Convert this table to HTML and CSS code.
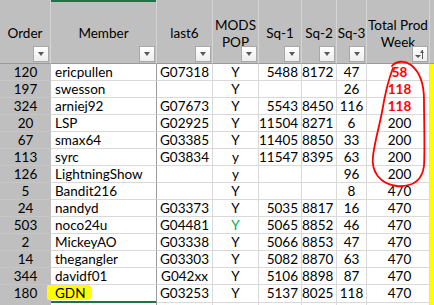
FILE: index.html
```html
<!DOCTYPE html>
<html>
<head>
<meta charset="utf-8">
<link rel="stylesheet" href="styles.css">
</head>
<body>
<div class="sheet">
  <div class="hrow">
    <div class="h">Order<span class="dd"></span></div>
    <div class="h h-member">Member<span class="dd"></span></div>
    <div class="h">last6<span class="dd"></span></div>
    <div class="h">MODS<br>POP<span class="dd"></span></div>
    <div class="h">Sq-1<span class="dd"></span></div>
    <div class="h">Sq-2<span class="dd"></span></div>
    <div class="h">Sq-3<span class="dd"></span></div>
    <div class="h">Total Prod<br>Week<span class="dd dd-sort"><span class="up"></span></span></div>
    <div class="h h-edge"></div>
  </div>

  <div class="row"><div class="c o">120</div><div class="c m">ericpullen</div><div class="c l">G07318</div><div class="c p">Y</div><div class="c s1">5488</div><div class="c s2">8172</div><div class="c s3">47</div><div class="c t red">58</div><div class="c e"></div></div>
  <div class="row"><div class="c o">197</div><div class="c m">swesson</div><div class="c l"></div><div class="c p">Y</div><div class="c s1"></div><div class="c s2"></div><div class="c s3">26</div><div class="c t red">118</div><div class="c e"></div></div>
  <div class="row"><div class="c o">324</div><div class="c m">arniej92</div><div class="c l">G07673</div><div class="c p">Y</div><div class="c s1">5543</div><div class="c s2">8450</div><div class="c s3">116</div><div class="c t red">118</div><div class="c e"></div></div>
  <div class="row"><div class="c o">20</div><div class="c m">LSP</div><div class="c l">G02925</div><div class="c p">Y</div><div class="c s1">11504</div><div class="c s2">8271</div><div class="c s3">6</div><div class="c t">200</div><div class="c e"></div></div>
  <div class="row"><div class="c o">67</div><div class="c m">smax64</div><div class="c l">G03385</div><div class="c p">Y</div><div class="c s1">11405</div><div class="c s2">8850</div><div class="c s3">33</div><div class="c t">200</div><div class="c e"></div></div>
  <div class="row"><div class="c o">113</div><div class="c m">syrc</div><div class="c l">G03834</div><div class="c p">y</div><div class="c s1">11547</div><div class="c s2">8395</div><div class="c s3">63</div><div class="c t">200</div><div class="c e"></div></div>
  <div class="row"><div class="c o">126</div><div class="c m">LightningShow</div><div class="c l"></div><div class="c p">y</div><div class="c s1"></div><div class="c s2"></div><div class="c s3">96</div><div class="c t">200</div><div class="c e"></div></div>
  <div class="row"><div class="c o">5</div><div class="c m">Bandit216</div><div class="c l"></div><div class="c p">Y</div><div class="c s1"></div><div class="c s2"></div><div class="c s3">8</div><div class="c t">470</div><div class="c e"></div></div>
  <div class="row"><div class="c o">24</div><div class="c m">nandyd</div><div class="c l">G03373</div><div class="c p">Y</div><div class="c s1">5035</div><div class="c s2">8817</div><div class="c s3">16</div><div class="c t">470</div><div class="c e"></div></div>
  <div class="row"><div class="c o">503</div><div class="c m">noco24u</div><div class="c l">G04481</div><div class="c p green">Y</div><div class="c s1">5065</div><div class="c s2">8852</div><div class="c s3">46</div><div class="c t">470</div><div class="c e"></div></div>
  <div class="row"><div class="c o">2</div><div class="c m">MickeyAO</div><div class="c l">G03338</div><div class="c p">Y</div><div class="c s1">5066</div><div class="c s2">8853</div><div class="c s3">47</div><div class="c t">470</div><div class="c e"></div></div>
  <div class="row"><div class="c o">14</div><div class="c m">thegangler</div><div class="c l">G03303</div><div class="c p">Y</div><div class="c s1">5082</div><div class="c s2">8870</div><div class="c s3">63</div><div class="c t">470</div><div class="c e"></div></div>
  <div class="row"><div class="c o">344</div><div class="c m">davidf01</div><div class="c l">G042xx</div><div class="c p">Y</div><div class="c s1">5106</div><div class="c s2">8898</div><div class="c s3">87</div><div class="c t">470</div><div class="c e"></div></div>
  <div class="row"><div class="c o">180</div><div class="c m m-active"><span class="hl">GDN</span></div><div class="c l">G03253</div><div class="c p">Y</div><div class="c s1">5137</div><div class="c s2">8025</div><div class="c s3">118</div><div class="c t">470</div><div class="c e"></div></div>
  <div class="row"><div class="c o"></div><div class="c m"></div><div class="c l"></div><div class="c p"></div><div class="c s1"></div><div class="c s2"></div><div class="c s3"></div><div class="c t"></div><div class="c e"></div></div>

  <svg class="ink" width="434" height="305" viewBox="0 0 434 305">
    <path d="M393,68 C389,78 385,94 382,112 C379,128 375,140 373,156 C371,172 380,184 397,186 C412,187 422,181 424,166 C425,150 424,120 424,100 C424,84 420,72 411,65 C404,60 396,61 392,66" fill="none" stroke="#ff0000" stroke-width="1.8" stroke-linecap="round"/>
  </svg>
</div>
</body>
</html>
```

FILE: styles.css
```css
html, body {
  margin: 0;
  padding: 0;
  background: #ffffff;
}

.sheet {
  position: relative;
  width: 434px;
  height: 305px;
  overflow: hidden;
  font-family: "Lato", "Liberation Sans", sans-serif;
  font-size: 13.5px;
  color: #000;
}

.hrow,
.row {
  display: grid;
  grid-template-columns: 51px 106px 56px 46px 43px 35px 30px 63px 4px;
}

.hrow {
  height: 64px;
}

.h {
  position: relative;
  box-sizing: border-box;
  background: #bfbfbf;
  border-right: 1px solid #d4d4d4;
  border-bottom: 1px solid #9a9a9a;
  display: flex;
  align-items: center;
  justify-content: center;
  text-align: center;
  line-height: 17px;
  padding-top: 4px;
  white-space: nowrap;
}

.h-member {
  box-shadow: inset 0 2px 0 #217346;
}

.h-edge {
  border-right: none;
}

.dd {
  position: absolute;
  right: 1px;
  bottom: 1px;
  width: 16px;
  height: 16px;
  box-sizing: border-box;
  border: 1px solid #a8a8a8;
  background: linear-gradient(#ffffff, #ededed);
}

.dd::after {
  content: "";
  position: absolute;
  left: 4px;
  top: 5px;
  border-left: 3.5px solid transparent;
  border-right: 3.5px solid transparent;
  border-top: 4px solid #595959;
}

.dd-sort::after {
  left: 2px;
  top: 8px;
  border-left: 3px solid transparent;
  border-right: 3px solid transparent;
  border-top: 3px solid #595959;
}

.dd-sort .up {
  position: absolute;
  left: 9px;
  top: 3px;
  width: 1px;
  height: 9px;
  background: #595959;
}

.dd-sort .up::before {
  content: "";
  position: absolute;
  left: -2px;
  top: 0;
  border-left: 2.5px solid transparent;
  border-right: 2.5px solid transparent;
  border-bottom: 3px solid #595959;
}

.row {
  height: 17px;
}

.c {
  box-sizing: border-box;
  border-right: 1px solid #d9d9d9;
  border-bottom: 1px solid #d9d9d9;
  line-height: 16px;
  white-space: nowrap;
  overflow: visible;
}

.o {
  background: #bfbfbf;
  border-right: none;
  border-bottom-color: #c6c6c6;
  text-align: center;
}

.m {
  padding-left: 4px;
  border-right-color: #9a9a9a;
  position: relative;
}

.m-active {
  border-bottom: 2px solid #217346;
}

.hl {
  display: inline-block;
  background: #ffff00;
  margin-left: -8px;
  padding: 0 7px 0 8px;
  height: 15px;
  line-height: 16px;
  border-radius: 2px 5px 5px 2px;
}

.l,
.p,
.s3,
.t {
  text-align: center;
}

.s1,
.s2 {
  text-align: right;
  padding-right: 3px;
}

.t {
  padding-left: 3px;
}

.red {
  color: #ff0000;
  font-weight: bold;
}

.green {
  color: #00b050;
}

.e {
  background: #ffff00;
  border-right: none;
  border-bottom: none;
}

.ink {
  position: absolute;
  left: 0;
  top: 0;
  pointer-events: none;
}
```
